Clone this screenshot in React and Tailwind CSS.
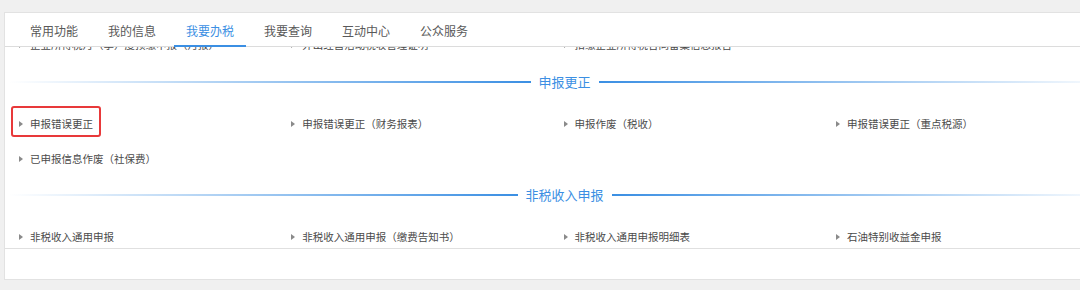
const tabs = ["常用功能", "我的信息", "我要办税", "我要查询", "互动中心", "公众服务"];

const clippedRow = ["企业所得税月（季）度预缴申报（月报）", "外出经营活动税收管理证明", "扣缴企业所得税合同备案信息报告"];
const correctionItems = ["申报错误更正", "申报错误更正（财务报表）", "申报作废（税收）", "申报错误更正（重点税源）", "已申报信息作废（社保费）"];
const nonTaxItems = ["非税收入通用申报", "非税收入通用申报（缴费告知书）", "非税收入通用申报明细表", "石油特别收益金申报"];

function Item({ label, marked }) {
  return (
    <div className="relative flex items-center h-[22px]">
      <span className="w-0 h-0 border-y-[3px] border-y-transparent border-l-[4px] border-l-[#8a8a8a]" />
      <span className="ml-[7px] text-[10.5px] text-[#4a4a4a] whitespace-nowrap [text-spacing-trim:space-all]">{label}</span>
      {marked && (
        <div className="absolute left-[-8px] top-[-7px] w-[90px] h-[31px] border-2 border-[#e8393a] rounded-[3px]" />
      )}
    </div>
  );
}

function Row({ items, className = "" }) {
  return (
    <div className={"grid grid-cols-[repeat(4,272.3px)] pl-[10px] " + className}>
      {items.map((it, i) => (
        <Item key={i} label={it} marked={it === "申报错误更正" && i === 0} />
      ))}
    </div>
  );
}

function Heading({ title, className = "" }) {
  return (
    <div className={"flex items-center h-[22px] " + className}>
      <div className="flex-1 h-[2px] bg-gradient-to-r from-transparent to-[#3b8fe3]" />
      <span className="px-[8px] text-[13px] text-[#3b8fe3] whitespace-nowrap">{title}</span>
      <div className="flex-1 h-[2px] bg-gradient-to-l from-transparent to-[#3b8fe3]" />
    </div>
  );
}

export default function App() {
  return (
    <div className="w-[1080px] h-[290px] overflow-hidden bg-[#f0f0f0] pt-[12px] font-['Noto_Sans_CJK_SC','Noto_Sans',sans-serif]">
      <div className="ml-[4px] w-[1121px] bg-white border border-[#e2e2e2]">
        {/* Tab bar */}
        <div className="flex gap-[6px] pl-[13px] h-[34px] border-b border-[#dcdcdc]">
          {tabs.map((t) => (
            <div
              key={t}
              className={
                "flex items-center px-[12px] pt-[4px] -mb-px text-[12px] whitespace-nowrap " +
                (t === "我要办税" ? "text-[#3b8fe3] border-b-2 border-[#3b8fe3]" : "text-[#595959] border-b-2 border-transparent")
              }
            >
              {t}
            </div>
          ))}
        </div>

        {/* Scrolled content */}
        <div className="h-[202px] overflow-hidden border-b border-[#e0e0e0] px-[4px]">
          <Row items={clippedRow} className="-mt-[13px]" />
          <Heading title="申报更正" className="mt-[15px]" />
          <Row items={correctionItems.slice(0, 4)} className="mt-[20px]" />
          <Row items={correctionItems.slice(4)} className="mt-[13px]" />
          <Heading title="非税收入申报" className="mt-[14px]" />
          <Row items={nonTaxItems} className="mt-[20px]" />
        </div>

        <div className="h-[30px]" />
      </div>
    </div>
  );
}
